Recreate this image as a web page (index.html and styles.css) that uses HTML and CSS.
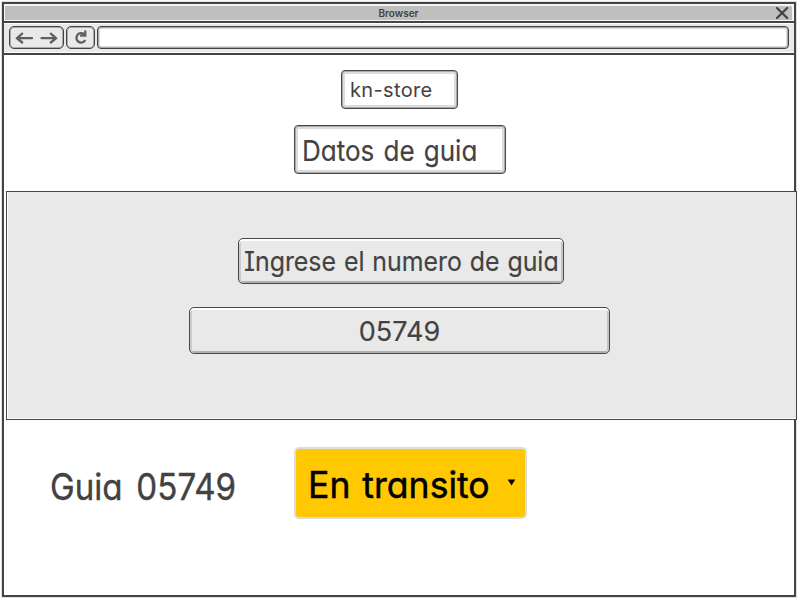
FILE: index.html
```
<!DOCTYPE html>
<html lang="es">
<head>
<meta charset="utf-8">
<title>kn-store</title>
<link rel="stylesheet" href="styles.css">
</head>
<body>
<div class="window">
  <header class="titlebar">
    <div class="title"><span>Browser</span></div>
    <svg class="close" width="14" height="14" viewBox="0 0 14 14"><path d="M2 2L12.2 12M12.2 2L2 12"/></svg>
  </header>
  <nav class="toolbar">
    <div class="btn history">
      <svg width="55" height="23" viewBox="0 0 55 23"><path d="M23 12.2H8.500M13.200 7.700L8 12.200L13.200 16.500M32.500 12.200H46.500M41.800 7.700L47 12.200L41.800 16.500"/></svg>
    </div>
    <div class="btn reload">
      <svg width="29" height="23" viewBox="0 0 29 23"><path d="M18.200 8.300A4.700 4.700 0 1 0 18.800 14.800M19.300 5.500V9.700H15"/></svg>
    </div>
    <div class="address"></div>
  </nav>
  <main>
    <div class="field store"><span>kn-store</span></div>
    <div class="field heading"><span>Datos de guia</span></div>
    <section class="panel">
      <div class="field prompt"><span>Ingrese el numero de guia</span></div>
      <div class="field number"><span>05749</span></div>
    </section>
    <div class="result">
      <div class="guide"><span>Guia 05749</span></div>
      <div class="status"><span>En transito</span><svg width="9" height="7" viewBox="0 0 9 7"><path d="M.7 .5H8.300L4.500 6.500Z"/></svg></div>
    </div>
  </main>
</div>
</body>
</html>
```
FILE: styles.css
```
* { box-sizing: border-box; }
body {
  margin: 0;
  padding: 2px;
  background: #fff;
  color: #424242;
  font-family: "Comic Sans MS", Inter, "Open Sans", sans-serif;
  font-feature-settings: "cv11", "cv08";
  overflow: hidden;
}
span { display: inline-block; white-space: nowrap; transform-origin: left center; }
svg { display: block; fill: none; stroke: #606060; stroke-width: 2.3; stroke-linecap: round; }
.window { width: 794px; height: 595px; border: 2px solid #444; box-shadow: 0 0 0 1px #e0e0e0; }
.titlebar {
  display: flex;
  position: relative;
  height: 19px;
  padding: 2px 2px 1px 1px;
  background: #f4f4f4;
  border-bottom: 2px solid #444;
}
.title { flex: 1; background: #bfbfbf; text-align: center; font-size: 10px; font-weight: 600; line-height: 15px; }
.close { position: absolute; right: 5px; top: 2px; stroke: #444; }
.toolbar {
  display: flex;
  height: 32px;
  padding: 3px 5px 0 5px;
  background: #e9e9e9;
  border-bottom: 2px solid #444;
  box-shadow: inset 0 1px #fff, inset 0 -1px #fff;
}
.btn { height: 23px; border: 1px solid #444; border-radius: 5px; box-shadow: inset 0 0 0 1px #aaa; }
.history { width: 55px; }
.reload { width: 29px; margin: 0 2px; }
.btn svg { margin: -1px; }
.address { flex: 1; height: 23px; background: #fff; border: 1px solid #444; border-radius: 4px; box-shadow: inset 0 0 0 1px #aaa, inset 0 0 0 2px #ddd; }
main { display: flex; flex-direction: column; padding-top: 15px; -webkit-text-stroke: .15px currentColor; }
.field { display: flex; align-items: center; border: 1px solid #484848; border-radius: 4px; }
.store { width: 117px; height: 39px; margin-left: 337px; padding-left: 8px; font-size: 20px; letter-spacing: .35px; box-shadow: inset 0 0 0 1px #aaa, inset 0 0 0 3px #dedcde; -webkit-text-stroke-width: 0; }
.heading { width: 212px; height: 49px; margin: 16px 0 0 290px; padding: 2px 0 0 7px; font-size: 29px; box-shadow: inset 0 0 0 1px #aaa, inset 0 0 0 3px #dcdcdc; }
.heading span { word-spacing: 2px; transform: scaleX(.898); }
.panel { width: 791px; height: 229px; margin: 17px 0 0 2px; padding-top: 46px; background: #e9e9e9; border: 1px solid #444; position: relative; box-shadow: inset 1px 0 #fff, inset 0 -1px #fff; }
.panel .field { border-radius: 5px; box-shadow: inset 0 2px #fff, inset 2px 0 #ccc, inset -2px 0 #c4c4c4, inset 0 -2px #b0b0b0; }
.prompt { width: 326px; height: 46px; margin-left: 231px; padding: 1px 0 0 5px; font-size: 27px; }
.prompt span { word-spacing: 1px; transform: scaleX(.921); }
.number { width: 421px; height: 47px; margin: 23px 0 0 182px; padding-top: 2px; justify-content: center; font-size: 27px; }
.result { display: flex; padding: 27px 0 0 46px; }
.guide { width: 244px; padding-top: 18px; font-size: 37px; line-height: 44px; -webkit-text-stroke-width: .4px; }
.guide span { word-spacing: 5px; transform: scaleX(.895); }
.status { display: flex; width: 233px; height: 72px; align-items: center; padding: 3px 0 0 12px; background: #ffc800; border: 2px solid #dcdcdc; border-radius: 5px; color: #000; font-size: 37px; position: relative; -webkit-text-stroke-width: .5px; }
.status span { word-spacing: 2px; transform: scaleX(.962); }
.status svg { position: absolute; left: 211px; top: 30px; fill: #000; stroke: none; }
```
